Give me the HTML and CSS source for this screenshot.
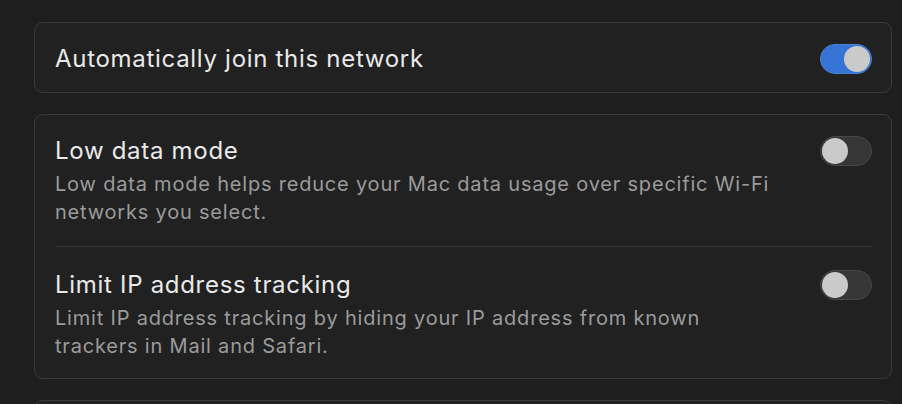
FILE: index.html
```html
<!DOCTYPE html>
<html>
<head>
<meta charset="utf-8">
<link rel="stylesheet" href="styles.css">
</head>
<body>
<div class="page">
  <div class="card card-single">
    <div class="row">
      <div class="text"><div class="title">Automatically join this network</div></div>
      <div class="toggle on"><div class="knob"></div></div>
    </div>
  </div>
  <div class="card">
    <div class="row item item-first">
      <div class="text">
        <div class="title">Low data mode</div>
        <div class="desc">Low data mode helps reduce your Mac data usage over specific Wi-Fi networks you select.</div>
      </div>
      <div class="toggle"><div class="knob"></div></div>
    </div>
    <div class="divider"></div>
    <div class="row item item-last">
      <div class="text">
        <div class="title">Limit IP address tracking</div>
        <div class="desc">Limit IP address tracking by hiding your IP address from known trackers in Mail and Safari.</div>
      </div>
      <div class="toggle"><div class="knob"></div></div>
    </div>
  </div>
  <div class="card card-next"></div>
</div>
</body>
</html>
```
FILE: styles.css
```css
html, body {
  margin: 0;
  padding: 0;
  background: #1e1e1e;
  overflow: hidden;
}
body {
  font-family: Inter, "Noto Sans", sans-serif;
  color: #e6e6e6;
  width: 902px;
  height: 404px;
}
.page {
  padding: 22px 10px 0 34px;
  display: flex;
  flex-direction: column;
  gap: 21px;
}
.card {
  background: #212121;
  border: 1px solid #3b3b3b;
  border-radius: 9px;
  padding: 0 19px 0 20px;
}
.card-single .row {
  box-sizing: border-box;
  height: 69px;
  padding-top: 2px;
  align-items: center;
}
.row {
  display: flex;
  justify-content: space-between;
}
.item-first {
  padding: 21px 0 20px;
}
.item-last {
  padding: 23px 0 18px;
}
.title {
  font-size: 24px;
  line-height: 30px;
  color: #e9e9e9;
  letter-spacing: 0.7px;
}
.desc {
  margin-top: 4px;
  font-size: 20px;
  line-height: 28px;
  color: #9b9b9b;
  width: 730px;
  letter-spacing: 0.8px;
}
.divider {
  height: 1px;
  background: #353535;
}
.toggle {
  flex: none;
  width: 50px;
  height: 28px;
  border-radius: 15px;
  background: #363636;
  border: 1px solid #484848;
  position: relative;
}
.toggle .knob {
  position: absolute;
  top: 1px;
  left: 1px;
  width: 26px;
  height: 26px;
  border-radius: 50%;
  background: #cacaca;
}
.toggle.on {
  background: #3574d5;
  border-color: #4a82da;
}
.toggle.on .knob {
  left: auto;
  right: 1px;
}
.card-next {
  height: 40px;
}
```
